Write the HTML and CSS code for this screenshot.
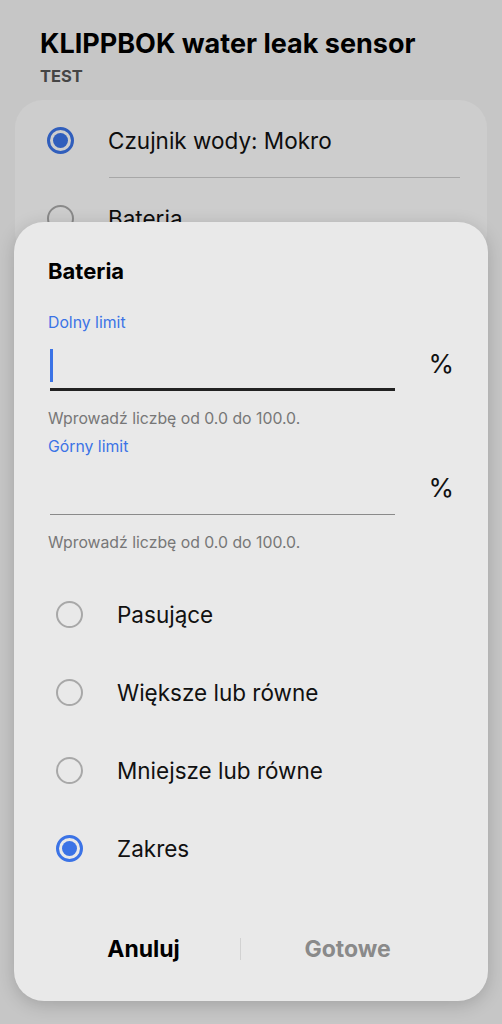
FILE: index.html
```html
<!DOCTYPE html>
<html lang="pl">
<head>
<meta charset="utf-8">
<link rel="stylesheet" href="styles.css">
</head>
<body>
<div class="page">
  <header class="head">
    <h1 class="title">KLIPPBOK water leak sensor</h1>
    <div class="sub">TEST</div>
  </header>
  <div class="card">
    <div class="row">
      <span class="radio on"></span>
      <span class="rtext">Czujnik wody: Mokro</span>
    </div>
    <div class="divider"></div>
    <div class="row">
      <span class="radio"></span>
      <span class="rtext">Bateria</span>
    </div>
  </div>
</div>
<div class="scrim"></div>
<div class="dialog">
  <h2 class="dtitle">Bateria</h2>
  <div class="field">
    <div class="label">Dolny limit</div>
    <div class="inputrow">
      <div class="input focused"><span class="caret"></span></div>
      <span class="unit">%</span>
    </div>
    <div class="helper">Wprowadź liczbę od 0.0 do 100.0.</div>
  </div>
  <div class="field">
    <div class="label">Górny limit</div>
    <div class="inputrow">
      <div class="input"></div>
      <span class="unit">%</span>
    </div>
    <div class="helper">Wprowadź liczbę od 0.0 do 100.0.</div>
  </div>
  <div class="options">
    <div class="opt"><span class="radio"></span><span class="otext">Pasujące</span></div>
    <div class="opt"><span class="radio"></span><span class="otext">Większe lub równe</span></div>
    <div class="opt"><span class="radio"></span><span class="otext">Mniejsze lub równe</span></div>
    <div class="opt"><span class="radio on"></span><span class="otext">Zakres</span></div>
  </div>
  <div class="actions">
    <span class="btn cancel">Anuluj</span>
    <span class="sep"></span>
    <span class="btn done">Gotowe</span>
  </div>
</div>
</body>
</html>
```
FILE: styles.css
```css
* { box-sizing: border-box; margin: 0; padding: 0; }
html, body { width: 502px; height: 1024px; overflow: hidden; }
body {
  background: #f2f2f2;
  font-family: Inter, "Noto Sans", sans-serif;
  color: #111;
  position: relative;
}
.page { padding: 28px 15px 0 15px; }
.head { padding-left: 25px; }
.title { font-size: 27px; font-weight: 700; line-height: 32px; color: #000; letter-spacing: 0; }
.sub { font-size: 16.5px; font-weight: 700; color: #555; margin-top: 6px; line-height: 20px; }
.card {
  margin-top: 14px;
  height: 160px;
  background: #fafafa;
  border-radius: 28px;
  padding: 13px 27px 12px 32px;
}
.row { display: flex; align-items: center; height: 54px; }
.rtext { font-size: 22.5px; margin-left: 34px; color: #111; }
.divider { height: 1px; background: #ccc; margin-left: 62px; margin-top: 10px; margin-bottom: 13px; }
.radio {
  width: 27px; height: 27px; border-radius: 50%;
  border: 2px solid #a8a8a8; flex: none; position: relative;
}
.radio.on { border: 3px solid #3b73e6; }
.radio.on::after {
  content: ""; position: absolute; left: 3px; top: 3px; width: 15px; height: 15px;
  border-radius: 50%; background: #3b73e6;
}
.scrim { position: absolute; inset: 0; background: rgba(0,0,0,0.18); }
.dialog {
  position: absolute; left: 14px; top: 222px; width: 474px; height: 779px;
  background: #e9e9e9; border-radius: 30px;
  box-shadow: 0 4px 18px rgba(0,0,0,0.18);
  padding: 36px 34px 0 34px;
  display: flex; flex-direction: column;
}
.dtitle { font-size: 22px; font-weight: 700; line-height: 26px; color: #000; }
.label { font-size: 15.8px; color: #3b73e6; line-height: 20px; margin-top: 29px; }
.field + .field .label { margin-top: 8px; }
.inputrow { display: flex; align-items: center; height: 58px; }
.input { width: 346px; height: 44px; margin-left: 2px; border-bottom: 1px solid #8a8a8a; align-self: flex-end; position: relative; }
.input.focused { border-bottom: 3px solid #222; }
.caret { position: absolute; left: 0; bottom: 6px; width: 3px; height: 33px; background: #3b73e6; }
.unit { font-size: 26px; margin-left: 33px; color: #111; margin-top: 2px; }
.helper { font-size: 15.8px; color: #777; margin-top: 18px; line-height: 20px; }
.options { margin-top: 22px; padding-left: 8px; display: flex; flex-direction: column; }
.opt { display: flex; align-items: center; height: 78px; }
.otext { font-size: 22.5px; margin-left: 34px; color: #111; }
.actions { margin-top: auto; margin-bottom: 40px; margin-left: -1px; display: flex; align-items: center; height: 24px; }
.btn { font-size: 23px; font-weight: 700; text-align: center; }
.cancel { color: #000; width: 194px; }
.done { color: #8a8a8a; width: 214px; }
.sep { width: 1px; height: 22px; background: #d2d2d2; }
```
